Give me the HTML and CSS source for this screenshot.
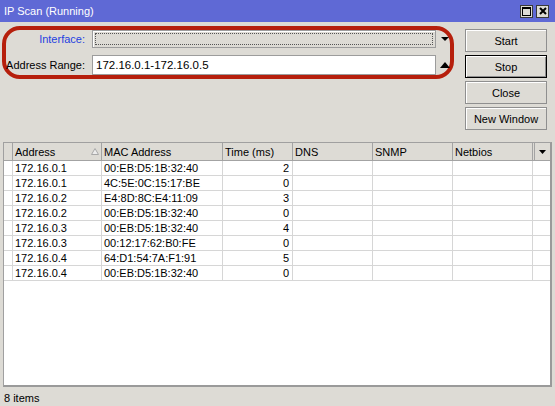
FILE: index.html
```html
<!DOCTYPE html>
<html lang="en">

<head>
    <title>IP Scan (Running)</title>
    <link rel="stylesheet" href="styles.css">
</head>

<body>
<div class="window">
    <div class="titlebar">
        <span class="title">IP Scan (Running)</span>
        <div class="title-buttons">
            <span class="title-btn">
                <svg width="9" height="9" viewBox="0 0 9 9">
                    <rect x="0.5" y="0.5" width="8" height="8" fill="none" stroke="#000"/>
                    <line x1="0" y1="1.5" x2="9" y2="1.5" stroke="#000"/>
                </svg>
            </span>
            <span class="title-btn">
                <svg width="8" height="8" viewBox="0 0 8 8">
                    <path d="M1 1 L7 7 M7 1 L1 7" stroke="#000" stroke-width="2"/>
                </svg>
            </span>
        </div>
    </div>

    <div class="top">
        <div class="params">
            <div class="param-row">
                <label class="param-label link">Interface:</label>
                <div class="field combo"><div class="focus-ring"></div></div>
                <span class="spin">
                    <svg width="8" height="6" viewBox="0 0 8 6">
                        <path d="M0 1 L8 1 L4 5 Z" fill="#000"/>
                    </svg>
                </span>
            </div>
            <div class="param-row">
                <label class="param-label">Address Range:</label>
                <div class="field text">172.16.0.1-172.16.0.5</div>
                <span class="spin">
                    <svg width="10" height="6" viewBox="0 0 10 6">
                        <path d="M0 6 L10 6 L5 0 Z" fill="#000"/>
                    </svg>
                </span>
            </div>
        </div>

        <div class="buttons">
            <button type="button">Start</button>
            <button type="button" class="default">Stop</button>
            <button type="button">Close</button>
            <button type="button">New Window</button>
        </div>
    </div>

    <div class="list">
        <table class="grid">
            <colgroup>
                <col class="c-mark">
                <col class="c-addr">
                <col class="c-mac">
                <col class="c-time">
                <col class="c-dns">
                <col class="c-snmp">
                <col class="c-netbios">
                <col class="c-menu">
            </colgroup>
            <thead>
            <tr>
                <th></th>
                <th>
                    <div class="sort-head">
                        <span>Address</span>
                        <svg width="8" height="7" viewBox="0 0 8 7">
                            <path d="M4 0.5 L7.5 6.5 L0.5 6.5 Z" fill="#ececec" stroke="#a8a8a8"/>
                        </svg>
                    </div>
                </th>
                <th>MAC Address</th>
                <th>Time (ms)</th>
                <th>DNS</th>
                <th>SNMP</th>
                <th>Netbios</th>
                <th class="menu-head">
                    <div class="menu-btn">
                        <svg width="7" height="4" viewBox="0 0 7 4">
                            <path d="M0 0 L7 0 L3.5 4 Z" fill="#000"/>
                        </svg>
                    </div>
                </th>
            </tr>
            </thead>
            <tbody>
            <tr><td></td><td>172.16.0.1</td><td>00:EB:D5:1B:32:40</td><td class="num">2</td><td></td><td></td><td></td><td class="last"></td></tr>
            <tr><td></td><td>172.16.0.1</td><td>4C:5E:0C:15:17:BE</td><td class="num">0</td><td></td><td></td><td></td><td class="last"></td></tr>
            <tr><td></td><td>172.16.0.2</td><td>E4:8D:8C:E4:11:09</td><td class="num">3</td><td></td><td></td><td></td><td class="last"></td></tr>
            <tr><td></td><td>172.16.0.2</td><td>00:EB:D5:1B:32:40</td><td class="num">0</td><td></td><td></td><td></td><td class="last"></td></tr>
            <tr><td></td><td>172.16.0.3</td><td>00:EB:D5:1B:32:40</td><td class="num">4</td><td></td><td></td><td></td><td class="last"></td></tr>
            <tr><td></td><td>172.16.0.3</td><td>00:12:17:62:B0:FE</td><td class="num">0</td><td></td><td></td><td></td><td class="last"></td></tr>
            <tr><td></td><td>172.16.0.4</td><td>64:D1:54:7A:F1:91</td><td class="num">5</td><td></td><td></td><td></td><td class="last"></td></tr>
            <tr><td></td><td>172.16.0.4</td><td>00:EB:D5:1B:32:40</td><td class="num">0</td><td></td><td></td><td></td><td class="last"></td></tr>
            </tbody>
        </table>
    </div>

    <div class="status">8 items</div>
</div>
</body>

</html>
```

FILE: styles.css
```css
* {
    box-sizing: border-box;
}

body {
    margin: 0;
    background-color: #dddbd5;
    font-family: "Liberation Sans", Arial, sans-serif;
    font-size: 11px;
    color: #000;
}

.window {
    width: 555px;
    height: 406px;
    display: flex;
    flex-direction: column;
}

.titlebar {
    height: 22px;
    background-color: #5f69d5;
    display: flex;
    align-items: center;
    justify-content: space-between;
    padding: 0 6px 0 4px;
}

.title {
    color: #fff;
    font-size: 11px;
}

.title-buttons {
    display: flex;
    gap: 3px;
}

.title-btn {
    width: 13px;
    height: 13px;
    background-color: #dddbd5;
    border: 1px solid #3a3a3a;
    display: flex;
    align-items: center;
    justify-content: center;
}

.top {
    height: 120px;
    display: flex;
    align-items: flex-start;
    padding-left: 2px;
}

.params {
    margin-top: 4px;
    width: 452px;
    height: 53px;
    border: 4px solid #b61f0c;
    border-radius: 18px;
    display: flex;
    flex-direction: column;
    gap: 7px;
}

.param-row {
    display: flex;
    align-items: center;
}

.param-row:first-child {
    height: 18px;
}

.param-row:last-child {
    height: 20px;
}

.param-label {
    width: 79px;
    margin-right: 7px;
    text-align: right;
    white-space: nowrap;
}

.link {
    color: #1f3fe0;
}

.field {
    width: 344px;
    height: 100%;
    border: 1px solid #9c9c9c;
}

.combo {
    padding: 2px;
    background-color: #dddbd5;
    box-shadow: inset 1px 1px #fff;
}

.focus-ring {
    height: 100%;
    border: 1px dotted #555;
}

.text {
    background-color: #fff;
    padding: 3px 0 0 3px;
    font-size: 11.5px;
}

.spin {
    width: 10px;
    margin-left: 4px;
    display: flex;
    justify-content: center;
}

.buttons {
    margin-top: 7px;
    margin-left: 11px;
    display: flex;
    flex-direction: column;
    gap: 3px;
}

button {
    width: 82px;
    height: 23px;
    padding: 0;
    background-color: #dddbd5;
    border: 1px solid #8f8f8f;
    box-shadow: inset 1px 1px #fff;
    font-family: inherit;
    font-size: 11px;
    color: #000;
}

button.default {
    border-color: #000;
    box-shadow: inset 1px 1px #fff, inset -1px -1px #8f8f8f;
}

.list {
    margin-left: 3px;
    width: 549px;
    height: 245px;
    background-color: #fff;
    border: 1px solid #a0a0a0;
    border-right: 2px solid #9a9a9a;
    border-bottom: 2px solid #9a9a9a;
}

.grid {
    width: 546px;
    table-layout: fixed;
    border-collapse: separate;
    border-spacing: 0;
}

.c-mark { width: 9px; }
.c-addr { width: 89px; }
.c-mac { width: 121px; }
.c-time { width: 70px; }
.c-dns { width: 80px; }
.c-snmp { width: 80px; }
.c-netbios { width: 80px; }
.c-menu { width: 17px; }

.grid th {
    height: 18px;
    padding: 0 0 0 2px;
    background-color: #dddbd5;
    border-right: 1px solid #a3a3a3;
    border-bottom: 1px solid #a3a3a3;
    font-weight: normal;
    text-align: left;
    white-space: nowrap;
}

.grid th.menu-head {
    border-right: none;
    padding-left: 1px;
}

.sort-head {
    display: flex;
    justify-content: space-between;
    align-items: center;
    padding-right: 2px;
}

.menu-btn {
    height: 17px;
    border-left: 1px solid #a3a3a3;
    display: flex;
    align-items: center;
    justify-content: center;
}

.grid td {
    height: 15px;
    padding: 0 0 0 2px;
    border-right: 1px solid #d6d6d6;
    border-bottom: 1px solid #d6d6d6;
    white-space: nowrap;
    line-height: 14px;
}

.grid td.num {
    text-align: right;
    padding-right: 3px;
}

.grid td.last {
    border-right: none;
}

.status {
    height: 19px;
    padding: 5px 0 0 4px;
}
```
